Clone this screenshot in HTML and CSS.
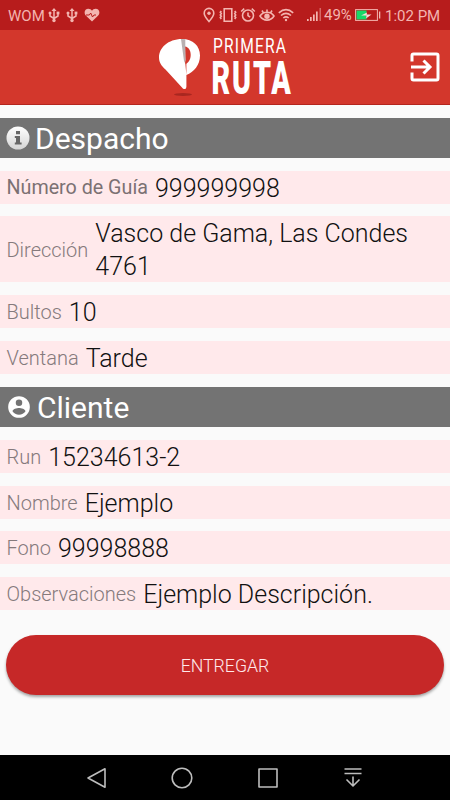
FILE: index.html
```html
<!DOCTYPE html>
<html lang="es">
<head>
<meta charset="UTF-8">
<meta name="viewport" content="width=device-width, initial-scale=1.0">
<title>Primera Ruta</title>
<link rel="stylesheet" href="styles.css">
</head>
<body>
<div class="status">
  <span class="carrier">WOM</span>
  <svg class="usb" width="12" height="16" viewBox="0 0 12 16"><path d="M6 2v11M2 6v3L6 11.500 10 9V6" fill="none" stroke="currentColor" stroke-width="1.500"/><path d="M3.500 4L6 1l2.500 3z"/><circle cx="6" cy="13.500" r="1.700"/><circle cx="2" cy="6" r="1.500"/><path d="M8.600 4.600h2.800v2.800H8.600z"/></svg>
  <svg class="usb" width="12" height="16" viewBox="0 0 12 16"><path d="M6 2v11M2 6v3L6 11.500 10 9V6" fill="none" stroke="currentColor" stroke-width="1.500"/><path d="M3.500 4L6 1l2.500 3z"/><circle cx="6" cy="13.500" r="1.700"/><circle cx="2" cy="6" r="1.500"/><path d="M8.600 4.600h2.800v2.800H8.600z"/></svg>
  <svg class="heart" width="16" height="14" viewBox="0 0 16 14"><path d="M8 13.500L2 7.800C-.8 4.500 1 .7 4.300.7 6 .7 7.300 1.600 8 2.800 8.700 1.600 10 .7 11.700.7 15 .7 16.800 4.500 14 7.800z"/><path class="pulse" d="M2 7h3.300l1.400-2 1.800 4 1.500-2h2"/></svg>
  <div class="status-right">
    <svg width="12" height="16" viewBox="0 0 12 16"><g class="line"><path d="M6 14.500C3 11 1.200 8.800 1.200 6.200a4.800 4.800 0 0 1 9.600 0C10.800 8.800 9 11 6 14.500z"/></g><circle cx="6" cy="6.300" r="1.700"/></svg>
    <svg class="vibrate" width="18" height="16" viewBox="0 0 18 16"><g class="line"><path d="M5.200 1.800h7.600v12.400H5.200z"/><path d="M2.300 4l-1 1.300 1 1.300-1 1.400 1 1.300-1 1.300 1 1.400M15.700 4l1 1.300-1 1.300 1 1.400-1 1.300 1 1.300-1 1.400"/></g></svg>
    <svg class="alarm" width="16" height="16" viewBox="0 0 16 16"><g class="line"><circle cx="8" cy="8.500" r="5.500"/><path d="M8 5.500v3.200l2.200 1.500M1.200 4.500l3-2.800M14.800 4.500l-3-2.800"/></g></svg>
    <svg class="eye" width="16" height="16" viewBox="0 0 16 16"><g class="line"><path d="M1 9c3.500-5 10.500-5 14 0-3.500 5.500-10.500 5.500-14 0zM8 5V2.500M4.500 6L3 3.500M11.500 6L13 3.500"/></g><circle cx="8" cy="9.200" r="2.700"/></svg>
    <svg class="wifi" width="16" height="14" viewBox="0 0 16 14"><g class="line"><path d="M.8 4.800c4.500-4 9.900-4 14.400 0M3 7.500c3.200-2.800 6.800-2.800 10 0M5.300 10c1.800-1.500 3.600-1.500 5.400 0"/></g><circle cx="8" cy="12" r="1.200"/></svg>
    <svg class="signal" width="16" height="14" viewBox="0 0 16 14"><path d="M1 11h1.700v2H1zM4 9h1.700v4H4zM7 6.500h1.700V13H7zM10 3.500h1.700V13H10z"/><path d="M13.500 0H15v13h-1.500z" opacity=".5"/></svg>
    <span class="percent">49%</span>
    <svg class="battery" width="26" height="12" viewBox="0 0 26 12"><rect x=".6" y=".6" width="21.800" height="10.800" fill="none" stroke="currentColor" stroke-width="1"/><path d="M24 2.500h1.300v7H24z"/><path d="M1.500 1.500h10v9h-10z" fill="#17d968"/><path d="M6 6.500l6-3-.3 2h4.800L11 9.500l.5-3z" fill="#f6dcd9"/></svg>
    <span class="clock">1:02 PM</span>
  </div>
</div>

<div class="header">
  <svg class="logo" width="150" height="74" viewBox="0 0 150 74">
    <ellipse cx="33" cy="64.500" rx="9" ry="1.500" fill="#a92720"/>
    <path d="M32 9C18 9 9 18 9 27.500c0 5 2.500 8.500 6.500 12L32 57.500c1.800 2.500 4.400 2 4.400-1V45C44 42 50 35 50 25.500 50 16 43 9 32 9z" fill="#fff"/>
    <path d="M35 16.500c7.500 1 7.500 15 .5 17.500z" fill="#d3372c"/>
    <path d="M31 9l4.300.3V17l.2 17-1.500-3z" fill="#b9b0b0"/>
    <path d="M35 30l1.400 3v12z" fill="#d3372c"/>
    <text class="logo-top" x="63" y="23" textLength="74" lengthAdjust="spacingAndGlyphs">PRIMERA</text>
    <text class="logo-bottom" x="61.500" y="64" textLength="81" lengthAdjust="spacingAndGlyphs">RUTA</text>
  </svg>
  <svg class="exit" width="30" height="30" viewBox="0 0 30 30"><path d="M2 9.500V3.500Q2 2 3.500 2h23Q28 2 28 3.500v23q0 1.500-1.500 1.500h-23Q2 28 2 26.500v-6M1 15h18M13.500 8.500L20 15l-6.500 6.500"/></svg>
</div>

<div class="content">
  <h1 class="section">
    <svg class="info" width="24" height="24" viewBox="0 0 24 24"><defs><linearGradient id="shine" x2="0" y2="1"><stop offset="0" stop-color="#fff"/><stop offset="1" stop-color="#d4d4d4"/></linearGradient></defs><circle cx="12" cy="12" r="11.500" fill="url(#shine)"/><path d="M10 5h4v3.200h-4zM8.800 10H14v6.500h1.600v2H8.800v-2H10V12H8.800z" fill="#666"/></svg>
    <span>Despacho</span>
  </h1>
  <div class="row"><span class="label strong">Número de Guía</span><span class="value">999999998</span></div>
  <div class="row"><span class="label">Dirección</span><span class="value">Vasco de Gama, Las Condes 4761</span></div>
  <div class="row"><span class="label">Bultos</span><span class="value">10</span></div>
  <div class="row"><span class="label">Ventana</span><span class="value">Tarde</span></div>

  <h1 class="section">
    <svg class="person" width="26" height="26" viewBox="0 0 24 24"><path d="M12 2a10 10 0 1 0 0 20 10 10 0 0 0 0-20zm0 3a3 3 0 1 1 0 6 3 3 0 0 1 0-6zm0 14.200a7.200 7.200 0 0 1-6-3.220c.03-1.990 4-3.080 6-3.080s5.970 1.090 6 3.080a7.200 7.200 0 0 1-6 3.220z" fill="#fff"/></svg>
    <span>Cliente</span>
  </h1>
  <div class="row"><span class="label">Run</span><span class="value">15234613-2</span></div>
  <div class="row"><span class="label">Nombre</span><span class="value">Ejemplo</span></div>
  <div class="row"><span class="label">Fono</span><span class="value">99998888</span></div>
  <div class="row"><span class="label">Observaciones</span><span class="value">Ejemplo Descripción.</span></div>

  <button class="deliver">ENTREGAR</button>
</div>

<div class="navbar">
  <svg width="22" height="22" viewBox="0 0 22 22"><path d="M19 1.800v18.400L2 11z"/></svg>
  <svg width="22" height="22" viewBox="0 0 22 22"><circle cx="11" cy="11" r="9.800"/></svg>
  <svg width="22" height="22" viewBox="0 0 22 22"><path d="M2 2h18v18H2z"/></svg>
  <svg width="22" height="22" viewBox="0 0 22 22"><path d="M2.500 2h17M2.500 6.500h17M11 9.500V19M4.500 12.500L11 19l6.500-6.500"/></svg>
</div>
</body>
</html>
```
FILE: styles.css
```css
* {
  box-sizing: border-box;
}
body {
  margin: 0;
  height: 800px;
  display: flex;
  flex-direction: column;
  background: #fafafa;
  font-family: Roboto, sans-serif;
  overflow: hidden;
}
svg {
  display: block;
  flex: none;
}

/* Barra de estado */
.status {
  height: 30px;
  padding: 0 10px 0 8px;
  display: flex;
  align-items: center;
  background: #b71c1c;
  color: #f3b5b0;
  font-size: 15px;
}
.status svg {
  fill: currentColor;
}
.status .line {
  fill: none;
  stroke: currentColor;
  stroke-width: 1.6;
}
.carrier {
  width: 40px;
  padding-top: 1px;
}
.usb {
  margin-right: 6px;
}
.status .pulse {
  fill: none;
  stroke: #b71c1c;
}
.status-right {
  margin-left: auto;
  display: flex;
  align-items: center;
}
.vibrate {
  margin-left: 4px;
}
.alarm {
  margin-left: 3px;
}
.eye,
.wifi {
  margin-left: 3px;
}
.signal {
  margin-left: 12px;
}
.percent {
  width: 27px;
  margin-left: 2px;
}
.battery {
  margin-left: 4px;
}
.clock {
  width: 55px;
  margin-left: 4px;
  padding-top: 1px;
  white-space: nowrap;
}

/* Encabezado */
.header {
  height: 75px;
  padding-right: 10px;
  display: flex;
  align-items: center;
  justify-content: flex-end;
  background: #d3372c;
  border-bottom: 1px solid #b4251d;
}
.logo {
  margin-right: 110px;
  overflow: visible;
}
.logo text {
  fill: #fff;
  font-family: Roboto, sans-serif;
}
.logo .logo-top {
  font-size: 20px;
  letter-spacing: 1.5px;
}
.logo .logo-bottom {
  font-size: 47px;
  font-weight: 900;
  letter-spacing: 3px;
}
.exit path {
  fill: none;
  stroke: #fff;
  stroke-width: 3;
}

/* Detalle */
.content {
  flex: 1;
  padding-top: 12.700px;
  display: flex;
  flex-direction: column;
  gap: 12.750px;
}
.section {
  height: 40.300px;
  margin: 0;
  padding: 0 6px;
  display: flex;
  align-items: center;
  background: #737373;
  color: #fff;
  font-size: 30px;
  font-weight: 400;
}
.info {
  margin-right: 5px;
}
.person {
  margin-right: 5px;
}
.section span {
  padding-top: 2px;
}
.row {
  min-height: 33px;
  padding: 0 6.500px;
  display: flex;
  align-items: center;
  background: #ffe9eb;
}
.label {
  margin-right: 7px;
  padding-top: 1px;
  color: #857a7c;
  font-size: 20px;
  font-weight: 300;
  white-space: nowrap;
}
.label.strong {
  color: #7b7173;
  font-size: 19.700px;
  font-weight: 400;
}
.value {
  color: #111;
  font-size: 25px;
  font-weight: 300;
  line-height: 33px;
}
.row .value {
  padding-top: 1px;
  margin-bottom: -1px;
}
.deliver {
  height: 60px;
  margin: 12.500px 6px 0;
  border: 0;
  border-radius: 30px;
  background: #c62828;
  box-shadow: 0 2px 3px rgba(0, 0, 0, 0.35);
  color: #ffe9eb;
  font-family: inherit;
  font-size: 17.700px;
  font-weight: 300;
  padding-top: 3px;
}

/* Barra de navegación */
.navbar {
  height: 45px;
  padding: 0 54px 0 54px;
  display: flex;
  align-items: center;
  justify-content: space-around;
  background: #000;
}
.navbar svg {
  fill: none;
  stroke: #bdbdbd;
  stroke-width: 1.6;
  stroke-linejoin: round;
}
```
